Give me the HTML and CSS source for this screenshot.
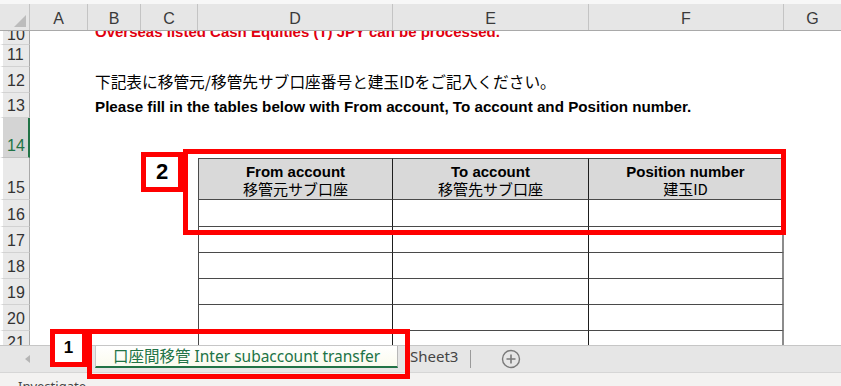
FILE: index.html
```html
<!DOCTYPE html>
<html lang="ja">
<head>
  <meta charset="UTF-8">
  <title>口座間移管</title>
  <link rel="stylesheet" href="styles.css">
</head>
<body>

<div id="workbook">
  <div class="top-strip"></div>

  <div class="col-head">
    <div class="corner"><span class="corner-tri"></span></div>
    <div class="ch col-a">A</div>
    <div class="ch col-b">B</div>
    <div class="ch col-c">C</div>
    <div class="ch col-d">D</div>
    <div class="ch col-e">E</div>
    <div class="ch col-f">F</div>
    <div class="ch col-g">G</div>
  </div>

  <div class="sheet">
    <div class="row r10">
      <div class="rh">10</div>
      <div class="line red-note">Overseas listed Cash Equities (T) JPY can be processed.</div>
    </div>
    <div class="row r11">
      <div class="rh">11</div>
      <div class="line"></div>
    </div>
    <div class="row r12">
      <div class="rh">12</div>
      <div class="line jp-note">下記表に移管元/移管先サブ口座番号と建玉IDをご記入ください。</div>
    </div>
    <div class="row r13">
      <div class="rh">13</div>
      <div class="line en-note">Please fill in the tables below with From account, To account and Position number.</div>
    </div>
    <div class="row r14">
      <div class="rh selected">14</div>
      <div class="line"></div>
    </div>
    <div class="row r15">
      <div class="rh">15</div>
      <div class="spacer"></div>
      <div class="cell col-d head"><b>From account</b><span>移管元サブ口座</span></div>
      <div class="cell col-e head"><b>To account</b><span>移管先サブ口座</span></div>
      <div class="cell col-f head"><b>Position number</b><span>建玉ID</span></div>
    </div>
    <div class="row r16">
      <div class="rh">16</div>
      <div class="spacer"></div>
      <div class="cell col-d"></div>
      <div class="cell col-e"></div>
      <div class="cell col-f"></div>
    </div>
    <div class="row r17">
      <div class="rh">17</div>
      <div class="spacer"></div>
      <div class="cell col-d"></div>
      <div class="cell col-e"></div>
      <div class="cell col-f"></div>
    </div>
    <div class="row r18">
      <div class="rh">18</div>
      <div class="spacer"></div>
      <div class="cell col-d"></div>
      <div class="cell col-e"></div>
      <div class="cell col-f"></div>
    </div>
    <div class="row r19">
      <div class="rh">19</div>
      <div class="spacer"></div>
      <div class="cell col-d"></div>
      <div class="cell col-e"></div>
      <div class="cell col-f"></div>
    </div>
    <div class="row r20">
      <div class="rh">20</div>
      <div class="spacer"></div>
      <div class="cell col-d"></div>
      <div class="cell col-e"></div>
      <div class="cell col-f"></div>
    </div>
    <div class="row r21">
      <div class="rh">21</div>
      <div class="spacer"></div>
      <div class="cell col-d last"></div>
      <div class="cell col-e last"></div>
      <div class="cell col-f last"></div>
    </div>
  </div>

  <div class="tab-bar">
    <div class="tab-nav"><span class="nav-arrow"></span></div>
    <div class="sheet-tab active">口座間移管 Inter subaccount transfer</div>
    <div class="sheet-tab">Sheet3</div>
    <div class="tab-sep"></div>
    <div class="add-sheet">
      <svg width="20" height="20" viewBox="0 0 20 20">
        <circle cx="10" cy="10" r="8.5" fill="none" stroke="#7a7a7a" stroke-width="1.4"/>
        <path d="M10 5.5v9M5.5 10h9" stroke="#7a7a7a" stroke-width="1.6"/>
      </svg>
    </div>
  </div>

  <div class="status-bar">Investigate</div>

  <!-- callouts -->
  <div class="callout-frame frame-2"></div>
  <div class="callout-num num-2">2</div>
  <div class="callout-frame frame-1"></div>
  <div class="callout-num num-1">1</div>
</div>

</body>
</html>
```

FILE: styles.css
```css
body {
    margin: 0;
    padding: 0;
    background: #fff;
    font-family: 'Liberation Sans', Arial, 'Noto Sans CJK JP', sans-serif;
    color: #000;
}

#workbook {
    position: relative;
    width: 841px;
    height: 386px;
    overflow: hidden;
    display: flex;
    flex-direction: column;
}

.top-strip {
    height: 4px;
    background: #f7f7f7;
}

/* column header */
.col-head {
    display: flex;
    height: 27px;
    background: #e6e6e6;
    border-bottom: 1px solid #a9a9a9;
    box-sizing: border-box;
}

.corner {
    position: relative;
    width: 30px;
    flex: none;
    border-right: 1px solid #c4c4c4;
    box-sizing: border-box;
}

.corner-tri {
    position: absolute;
    right: 3px;
    bottom: 3px;
    width: 0;
    height: 0;
    border-left: 12px solid transparent;
    border-bottom: 12px solid #bcbcbc;
}

.ch {
    flex: none;
    border-right: 1px solid #c4c4c4;
    box-sizing: border-box;
    text-align: center;
    font-size: 16px;
    line-height: 29px;
    color: #3a3a3a;
}

.col-a { width: 58px; }
.col-b { width: 53px; }
.col-c { width: 57px; }
.col-d { width: 195px; }
.col-e { width: 196px; }
.col-f { width: 195px; }
.col-g { width: 57px; border-right: none; }

/* rows */
.sheet {
    display: flex;
    flex-direction: column;
}

.row {
    display: flex;
    height: 26px;
}

.r10 { height: 14px; }
.r11 { height: 22px; }
.r13 { height: 25px; }
.r14 { height: 40px; }
.r15 { height: 42px; }
.r16 { height: 27px; }
.r21 { height: 14px; }

.rh {
    width: 30px;
    flex: none;
    box-sizing: border-box;
    background: #e9e9e9;
    border-left: 3px solid #fff;
    border-right: 1px solid #a9a9a9;
    border-bottom: 1px solid #d2d2d2;
    padding-left: 4px;
    padding-bottom: 2px;
    font-size: 16px;
    line-height: 18px;
    color: #333;
    display: flex;
    align-items: flex-end;
    overflow: hidden;
}

.r10 .rh {
    padding-bottom: 0;
}

.r21 .rh {
    align-items: flex-start;
    border-bottom: none;
    padding-top: 3px;
}

.rh.selected {
    background: #d4d4d4;
    color: #217346;
    border-right: 2px solid #217346;
    border-bottom-color: #c2c2c2;
}

.line {
    flex: 1;
    display: flex;
    align-items: center;
    padding-left: 65px;
    white-space: nowrap;
    overflow: hidden;
}

.red-note {
    align-items: flex-end;
    color: #e0000f;
    font-weight: bold;
    font-size: 15px;
    line-height: 16px;
    padding-bottom: 5px;
}

.jp-note {
    font-family: 'Noto Sans CJK JP', sans-serif;
    font-size: 15.7px;
    padding-top: 3px;
}

.en-note {
    font-weight: bold;
    font-size: 15.2px;
    padding-top: 2px;
}

.spacer {
    width: 168px;
    flex: none;
}

/* table cells */
.cell {
    flex: none;
    box-sizing: border-box;
    border-bottom: 1px solid #4a4a4a;
    border-right: 1px solid #1e1e1e;
}

.cell.col-d {
    border-left: 1px solid #4a4a4a;
}

.cell.col-f {
    border-right: 2px solid #8c8c8c;
}

.cell.last {
    border-bottom: none;
}

.cell.head {
    background: #d9d9d9;
    border-top: 1px solid #4a4a4a;
    display: flex;
    flex-direction: column;
    align-items: center;
    justify-content: center;
    font-size: 15px;
    line-height: 17px;
    padding-top: 2px;
}

.cell.head span {
    font-family: 'Noto Sans CJK JP', sans-serif;
    font-size: 15px;
}

/* sheet tabs */
.tab-bar {
    display: flex;
    align-items: flex-start;
    height: 27px;
    background: #e6e6e6;
    border-top: 1px solid #c6c6c6;
    box-sizing: border-box;
}

.tab-nav {
    width: 95px;
    height: 26px;
    flex: none;
    position: relative;
}

.nav-arrow {
    position: absolute;
    left: 25px;
    top: 9px;
    width: 0;
    height: 0;
    border-top: 4px solid transparent;
    border-bottom: 4px solid transparent;
    border-right: 5px solid #b5b5b5;
}

.sheet-tab {
    height: 22px;
    box-sizing: border-box;
    padding: 0 12px;
    font-family: 'Noto Sans', 'Noto Sans CJK JP', sans-serif;
    font-size: 15px;
    line-height: 20px;
    color: #444;
    white-space: nowrap;
}

.sheet-tab.active {
    width: 303px;
    padding-left: 17px;
    font-size: 15.5px;
    background: linear-gradient(#ffffff, #fbfbee);
    color: #217346;
    border-left: 1px solid #c8c8c8;
    border-right: 1px solid #b8b8b8;
    border-bottom: 2px solid #217346;
}

.tab-sep {
    width: 1px;
    height: 18px;
    margin-top: 4px;
    background: #9a9a9a;
}

.add-sheet {
    margin-left: 30px;
    margin-top: 3px;
    height: 20px;
}

.status-bar {
    height: 14px;
    background: #f3f2f1;
    border-top: 1px solid #d6d6d6;
    box-sizing: border-box;
    padding-left: 18px;
    font-family: 'Noto Sans', sans-serif;
    font-size: 13px;
    line-height: 27px;
    color: #444;
    overflow: hidden;
}

/* red callouts over the sheet */
.callout-frame {
    position: absolute;
    border: 5px solid #ff0000;
    box-sizing: border-box;
}

.frame-2 {
    left: 183px;
    top: 149px;
    width: 603px;
    height: 86px;
}

.frame-1 {
    left: 87px;
    top: 329px;
    width: 323px;
    height: 50px;
}

.callout-num {
    position: absolute;
    box-sizing: border-box;
    border: 5px solid #ff0000;
    background: #fff;
    font-weight: bold;
    display: flex;
    align-items: center;
    justify-content: center;
}

.num-2 {
    left: 141px;
    top: 152px;
    width: 42px;
    height: 40px;
    font-size: 22px;
}

.num-1 {
    left: 50px;
    top: 329px;
    width: 37px;
    height: 38px;
    font-size: 17px;
}
```
